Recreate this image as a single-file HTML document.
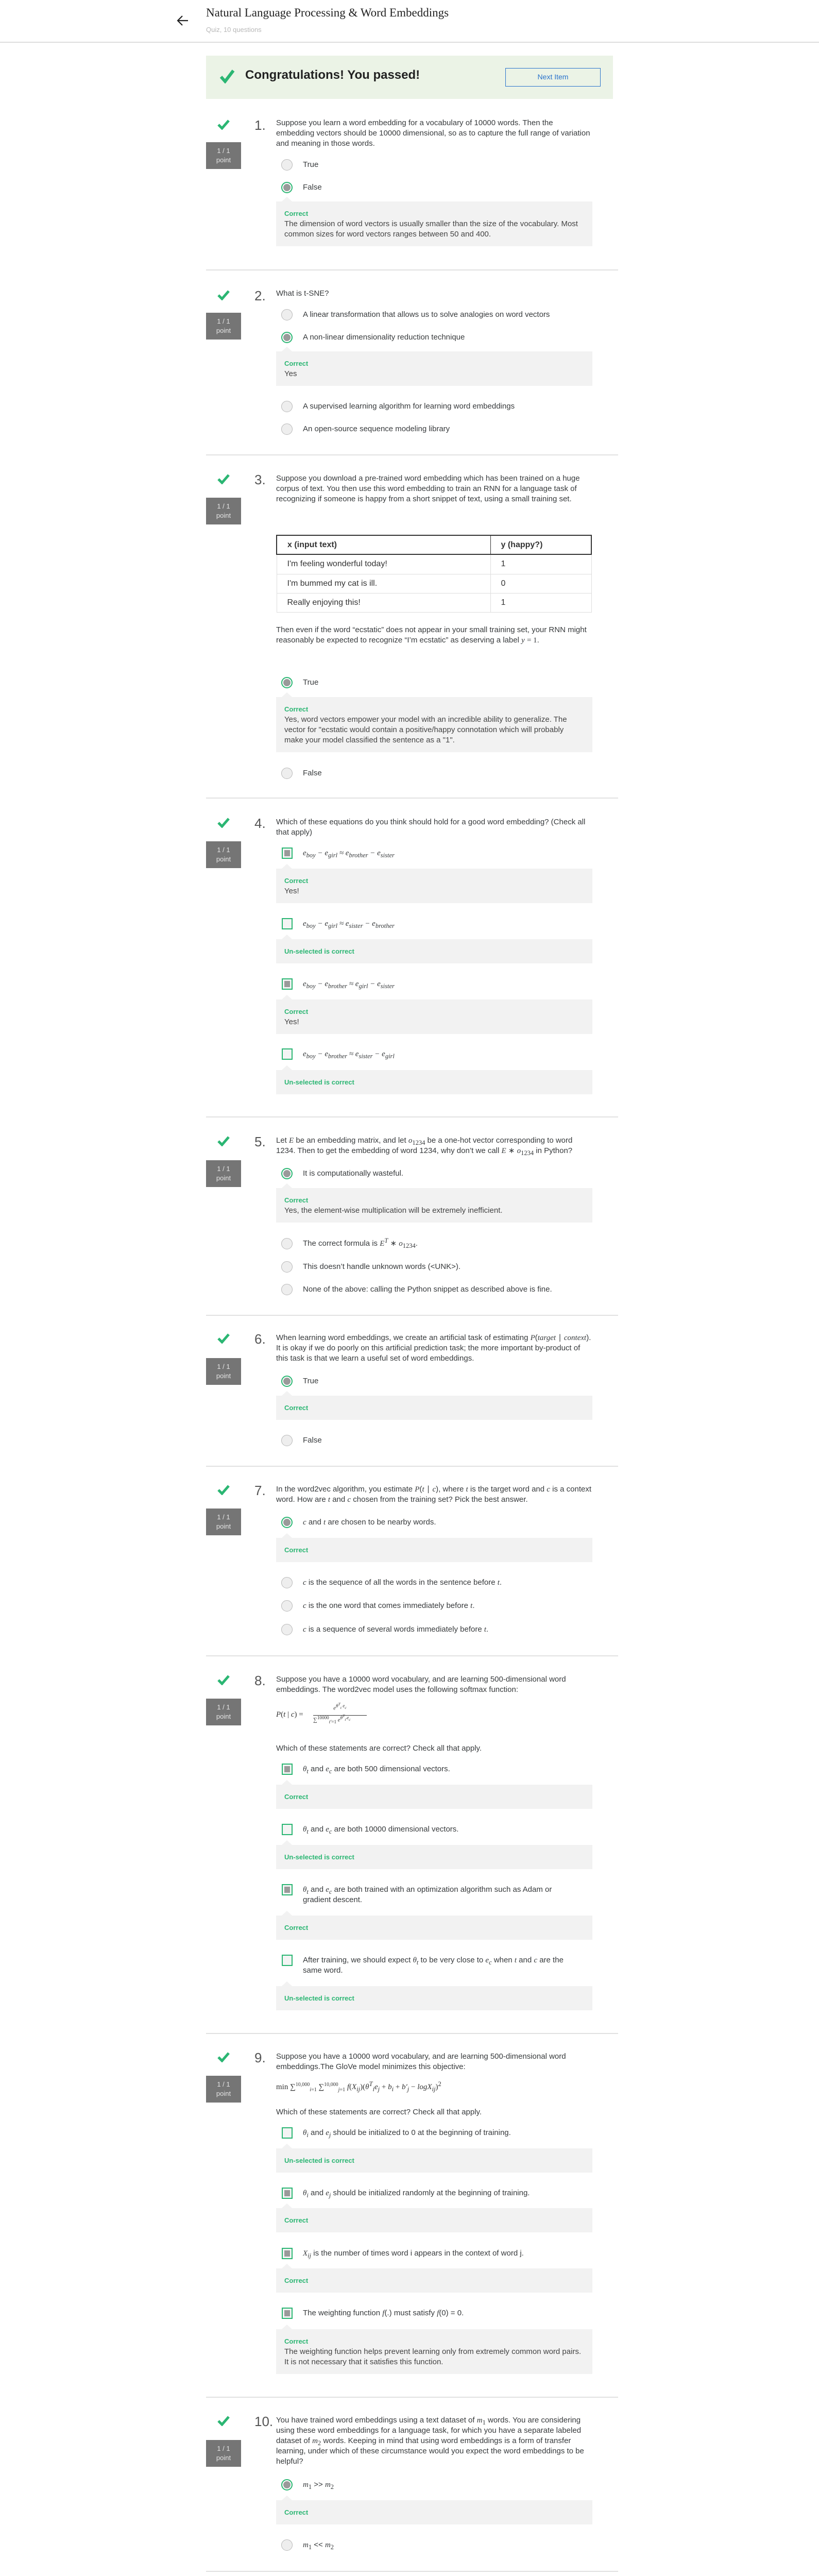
<!DOCTYPE html>
<html><head><meta charset="utf-8">
<style>
*{margin:0;padding:0;box-sizing:border-box}
body{width:1590px;height:5198px;position:relative;background:#fff;font-family:"Liberation Sans",sans-serif;color:#373a3c;overflow:hidden}
.a{position:absolute}
.m{font-family:"Liberation Serif",serif;font-style:italic}
.mr{font-family:"Liberation Serif",serif}
sub,sup{line-height:0}
.chk{position:absolute;left:422px;width:24px;height:20px}
.num{position:absolute;left:494px;font-size:26px;font-weight:300;color:#555;line-height:28px}
.score{position:absolute;left:400px;width:68px;height:52px;background:#757575;color:#e4e4e4;font-size:13px;line-height:18px;text-align:center;padding-top:8px}
.q{position:absolute;left:536px;width:614px;font-size:15px;line-height:20px;color:#373a3c}
.rad{position:absolute;left:546px;width:22px;height:22px;border-radius:50%;background:#eee;border:1px solid #b9b9b9}
.rad.s{background:#fff;border:2px solid #2bb673}
.rad.s::after{content:"";position:absolute;left:2px;top:2px;width:14px;height:14px;border-radius:50%;background:#9a9a9a}
.cb{position:absolute;left:547px;width:21px;height:22px;border:2px solid #2bb673;background:#f4f4f4}
.cb.s::after{content:"";position:absolute;left:3px;top:3px;width:11px;height:12px;background:#9a9a9a}
.ot{position:absolute;left:588px;width:562px;font-size:15px;line-height:20px;color:#373a3c}
.fb{position:absolute;left:536px;width:614px;background:#f2f2f2;padding:14px 16px 13px;font-size:15px;line-height:20px;color:#444}
.fb::before{content:"";position:absolute;left:11px;top:-9px;border-left:10px solid transparent;border-right:10px solid transparent;border-bottom:9px solid #f2f2f2}
.fb b{display:block;color:#2bb673;font-size:13px}
.dv{position:absolute;left:400px;width:800px;height:2px;background:#e1e1e1}
table{border-collapse:collapse}
</style></head><body>

<!-- header -->
<svg class="a" style="left:343px;top:29px" width="24" height="22" viewBox="0 0 24 22"><path d="M22 11H3M11 2L2 11l9 9" fill="none" stroke="#222" stroke-width="2.2"/></svg>
<div class="a mr" style="left:400px;top:12px;font-size:23px;color:#222;font-style:normal;white-space:nowrap">Natural Language Processing &amp; Word Embeddings</div>
<div class="a" style="left:400px;top:50px;font-size:13px;color:#b8b8b8">Quiz, 10 questions</div>
<div class="a" style="left:0;top:81px;width:1590px;height:2px;background:#ddd"></div>

<!-- banner -->
<div class="a" style="left:400px;top:108px;width:790px;height:84px;background:#ebf3e6"></div>
<svg class="a" style="left:426px;top:134px" width="30" height="28" viewBox="0 0 30 28"><path d="M3 15l8 9L27 3" fill="none" stroke="#2bb673" stroke-width="6"/></svg>
<div class="a" style="left:476px;top:132px;font-size:24px;font-weight:bold;color:#222;white-space:nowrap">Congratulations! You passed!</div>
<div class="a" style="left:981px;top:132px;width:185px;height:36px;border:1.5px solid #2a73cc;color:#2a73cc;font-size:14px;text-align:center;line-height:33px">Next Item</div>

<!-- Q1 -->
<svg class="chk" style="top:232px" viewBox="0 0 24 20"><path d="M2 10l7 7L22 2" fill="none" stroke="#2bb673" stroke-width="5"/></svg>
<div class="num" style="top:229px">1.</div>
<div class="score" style="top:276px">1 / 1<br>point</div>
<div class="q" style="top:229px">Suppose you learn a word embedding for a vocabulary of 10000 words. Then the embedding vectors should be 10000 dimensional, so as to capture the full range of variation and meaning in those words.</div>
<div class="rad" style="top:309px"></div><div class="ot" style="top:310px">True</div>
<div class="rad s" style="top:353px"></div><div class="ot" style="top:354px">False</div>
<div class="fb" style="top:391px"><b>Correct</b>The dimension of word vectors is usually smaller than the size of the vocabulary. Most common sizes for word vectors ranges between 50 and 400.</div>
<div class="dv" style="top:523px"></div>

<!-- Q2 -->
<svg class="chk" style="top:563px" viewBox="0 0 24 20"><path d="M2 10l7 7L22 2" fill="none" stroke="#2bb673" stroke-width="5"/></svg>
<div class="num" style="top:560px">2.</div>
<div class="score" style="top:607px">1 / 1<br>point</div>
<div class="q" style="top:560px">What is t-SNE?</div>
<div class="rad" style="top:600px"></div><div class="ot" style="top:601px">A linear transformation that allows us to solve analogies on word vectors</div>
<div class="rad s" style="top:644px"></div><div class="ot" style="top:645px">A non-linear dimensionality reduction technique</div>
<div class="fb" style="top:682px"><b>Correct</b>Yes</div>
<div class="rad" style="top:778px"></div><div class="ot" style="top:779px">A supervised learning algorithm for learning word embeddings</div>
<div class="rad" style="top:822px"></div><div class="ot" style="top:823px">An open-source sequence modeling library</div>
<div class="dv" style="top:882px"></div>

<!-- Q3 -->
<svg class="chk" style="top:920px" viewBox="0 0 24 20"><path d="M2 10l7 7L22 2" fill="none" stroke="#2bb673" stroke-width="5"/></svg>
<div class="num" style="top:917px">3.</div>
<div class="score" style="top:966px">1 / 1<br>point</div>
<div class="q" style="top:919px">Suppose you download a pre-trained word embedding which has been trained on a huge corpus of text. You then use this word embedding to train an RNN for a language task of recognizing if someone is happy from a short snippet of text, using a small training set.</div>
<table class="a" style="left:536px;top:1038px;width:613px;font-size:16px;color:#333">
<tr style="height:37px;border:2px solid #333"><th style="text-align:left;padding-left:20px;width:415px;border-right:1px solid #333">x (input text)</th><th style="text-align:left;padding-left:20px">y (happy?)</th></tr>
<tr style="height:38px;border:1px solid #ddd"><td style="padding-left:20px;border-right:1px solid #ddd">I'm feeling wonderful today!</td><td style="padding-left:20px">1</td></tr>
<tr style="height:37px;border:1px solid #ddd"><td style="padding-left:20px;border-right:1px solid #ddd">I'm bummed my cat is ill.</td><td style="padding-left:20px">0</td></tr>
<tr style="height:37px;border:1px solid #ddd"><td style="padding-left:20px;border-right:1px solid #ddd">Really enjoying this!</td><td style="padding-left:20px">1</td></tr>
</table>
<div class="q" style="top:1213px">Then even if the word “ecstatic” does not appear in your small training set, your RNN might reasonably be expected to recognize “I’m ecstatic” as deserving a label <span class="m">y</span> <span class="mr">= 1</span>.</div>
<div class="rad s" style="top:1314px"></div><div class="ot" style="top:1315px">True</div>
<div class="fb" style="top:1353px"><b>Correct</b>Yes, word vectors empower your model with an incredible ability to generalize. The vector for "ecstatic would contain a positive/happy connotation which will probably make your model classified the sentence as a "1".</div>
<div class="rad" style="top:1490px"></div><div class="ot" style="top:1491px">False</div>
<div class="dv" style="top:1548px"></div>

<!-- Q4 -->
<svg class="chk" style="top:1587px" viewBox="0 0 24 20"><path d="M2 10l7 7L22 2" fill="none" stroke="#2bb673" stroke-width="5"/></svg>
<div class="num" style="top:1584px">4.</div>
<div class="score" style="top:1633px">1 / 1<br>point</div>
<div class="q" style="top:1586px">Which of these equations do you think should hold for a good word embedding? (Check all that apply)</div>
<div class="cb s" style="top:1645px"></div><div class="ot m" style="top:1646px">e<sub>boy</sub> − e<sub>girl</sub> ≈ e<sub>brother</sub> − e<sub>sister</sub></div>
<div class="fb" style="top:1686px"><b>Correct</b>Yes!</div>
<div class="cb" style="top:1782px"></div><div class="ot m" style="top:1783px">e<sub>boy</sub> − e<sub>girl</sub> ≈ e<sub>sister</sub> − e<sub>brother</sub></div>
<div class="fb" style="top:1823px"><b>Un-selected is correct</b></div>
<div class="cb s" style="top:1899px"></div><div class="ot m" style="top:1900px">e<sub>boy</sub> − e<sub>brother</sub> ≈ e<sub>girl</sub> − e<sub>sister</sub></div>
<div class="fb" style="top:1940px"><b>Correct</b>Yes!</div>
<div class="cb" style="top:2035px"></div><div class="ot m" style="top:2036px">e<sub>boy</sub> − e<sub>brother</sub> ≈ e<sub>sister</sub> − e<sub>girl</sub></div>
<div class="fb" style="top:2077px"><b>Un-selected is correct</b></div>
<div class="dv" style="top:2167px"></div>

<!-- Q5 -->
<svg class="chk" style="top:2205px" viewBox="0 0 24 20"><path d="M2 10l7 7L22 2" fill="none" stroke="#2bb673" stroke-width="5"/></svg>
<div class="num" style="top:2202px">5.</div>
<div class="score" style="top:2252px">1 / 1<br>point</div>
<div class="q" style="top:2204px">Let <span class="m">E</span> be an embedding matrix, and let <span class="m">o</span><sub class="mr">1234</sub> be a one-hot vector corresponding to word 1234. Then to get the embedding of word 1234, why don’t we call <span class="m">E</span> ∗ <span class="m">o</span><sub class="mr">1234</sub> in Python?</div>
<div class="rad s" style="top:2267px"></div><div class="ot" style="top:2268px">It is computationally wasteful.</div>
<div class="fb" style="top:2306px"><b>Correct</b>Yes, the element-wise multiplication will be extremely inefficient.</div>
<div class="rad" style="top:2403px"></div><div class="ot" style="top:2404px">The correct formula is <span class="m">E<sup>T</sup></span> ∗ <span class="m">o</span><sub class="mr">1234</sub>.</div>
<div class="rad" style="top:2448px"></div><div class="ot" style="top:2449px">This doesn’t handle unknown words (&lt;UNK&gt;).</div>
<div class="rad" style="top:2492px"></div><div class="ot" style="top:2493px">None of the above: calling the Python snippet as described above is fine.</div>
<div class="dv" style="top:2552px"></div>

<!-- Q6 -->
<svg class="chk" style="top:2588px" viewBox="0 0 24 20"><path d="M2 10l7 7L22 2" fill="none" stroke="#2bb673" stroke-width="5"/></svg>
<div class="num" style="top:2585px">6.</div>
<div class="score" style="top:2636px">1 / 1<br>point</div>
<div class="q" style="top:2587px">When learning word embeddings, we create an artificial task of estimating <span class="m">P</span>(<span class="m">target</span> ∣ <span class="m">context</span>). It is okay if we do poorly on this artificial prediction task; the more important by-product of this task is that we learn a useful set of word embeddings.</div>
<div class="rad s" style="top:2670px"></div><div class="ot" style="top:2671px">True</div>
<div class="fb" style="top:2709px"><b>Correct</b></div>
<div class="rad" style="top:2785px"></div><div class="ot" style="top:2786px">False</div>
<div class="dv" style="top:2845px"></div>

<!-- Q7 -->
<svg class="chk" style="top:2882px" viewBox="0 0 24 20"><path d="M2 10l7 7L22 2" fill="none" stroke="#2bb673" stroke-width="5"/></svg>
<div class="num" style="top:2879px">7.</div>
<div class="score" style="top:2928px">1 / 1<br>point</div>
<div class="q" style="top:2881px">In the word2vec algorithm, you estimate <span class="m">P</span>(<span class="m">t</span> ∣ <span class="m">c</span>), where <span class="m">t</span> is the target word and <span class="m">c</span> is a context word. How are <span class="m">t</span> and <span class="m">c</span> chosen from the training set? Pick the best answer.</div>
<div class="rad s" style="top:2944px"></div><div class="ot" style="top:2945px"><span class="m">c</span> and <span class="m">t</span> are chosen to be nearby words.</div>
<div class="fb" style="top:2985px"><b>Correct</b></div>
<div class="rad" style="top:3061px"></div><div class="ot" style="top:3062px"><span class="m">c</span> is the sequence of all the words in the sentence before <span class="m">t</span>.</div>
<div class="rad" style="top:3106px"></div><div class="ot" style="top:3107px"><span class="m">c</span> is the one word that comes immediately before <span class="m">t</span>.</div>
<div class="rad" style="top:3152px"></div><div class="ot" style="top:3153px"><span class="m">c</span> is a sequence of several words immediately before <span class="m">t</span>.</div>
<div class="dv" style="top:3213px"></div>

<!-- Q8 -->
<svg class="chk" style="top:3251px" viewBox="0 0 24 20"><path d="M2 10l7 7L22 2" fill="none" stroke="#2bb673" stroke-width="5"/></svg>
<div class="num" style="top:3248px">8.</div>
<div class="score" style="top:3297px">1 / 1<br>point</div>
<div class="q" style="top:3250px">Suppose you have a 10000 word vocabulary, and are learning 500-dimensional word embeddings. The word2vec model uses the following softmax function:</div>
<div class="a mr" style="left:536px;top:3308px;font-size:15px;color:#333;white-space:nowrap">
<span style="position:absolute;top:12px"><i>P</i>(<i>t</i> | <i>c</i>) =</span>
<span style="position:absolute;left:72px;top:0;width:104px;text-align:center;font-size:11px"><i>e</i><sup><i>θ<sup>T</sup><sub>t</sub> e<sub>c</sub></i></sup></span>
<span style="position:absolute;left:72px;top:21px;width:104px;height:1px;background:#333"></span>
<span style="position:absolute;left:72px;top:23px;font-size:11px">∑<sup>10000</sup><sub><i>t′</i>=1</sub> <i>e</i><sup><i>θ<sup>T</sup><sub>t′</sub>e<sub>c</sub></i></sup></span>
</div>
<div class="q" style="top:3384px">Which of these statements are correct? Check all that apply.</div>
<div class="cb s" style="top:3423px"></div><div class="ot" style="top:3424px"><span class="m">θ<sub>t</sub></span> and <span class="m">e<sub>c</sub></span> are both 500 dimensional vectors.</div>
<div class="fb" style="top:3464px"><b>Correct</b></div>
<div class="cb" style="top:3540px"></div><div class="ot" style="top:3541px"><span class="m">θ<sub>t</sub></span> and <span class="m">e<sub>c</sub></span> are both 10000 dimensional vectors.</div>
<div class="fb" style="top:3581px"><b>Un-selected is correct</b></div>
<div class="cb s" style="top:3657px"></div><div class="ot" style="top:3658px"><span class="m">θ<sub>t</sub></span> and <span class="m">e<sub>c</sub></span> are both trained with an optimization algorithm such as Adam or<br>gradient descent.</div>
<div class="fb" style="top:3718px"><b>Correct</b></div>
<div class="cb" style="top:3794px"></div><div class="ot" style="top:3795px">After training, we should expect <span class="m">θ<sub>t</sub></span> to be very close to <span class="m">e<sub>c</sub></span> when <span class="m">t</span> and <span class="m">c</span> are the<br>same word.</div>
<div class="fb" style="top:3855px"><b>Un-selected is correct</b></div>
<div class="dv" style="top:3946px"></div>

<!-- Q9 -->
<svg class="chk" style="top:3983px" viewBox="0 0 24 20"><path d="M2 10l7 7L22 2" fill="none" stroke="#2bb673" stroke-width="5"/></svg>
<div class="num" style="top:3980px">9.</div>
<div class="score" style="top:4029px">1 / 1<br>point</div>
<div class="q" style="top:3982px">Suppose you have a 10000 word vocabulary, and are learning 500-dimensional word embeddings.The GloVe model minimizes this objective:</div>
<div class="a mr" style="left:536px;top:4043px;font-size:15px;color:#333;white-space:nowrap">min ∑<sup style="font-size:10px">10,000</sup><sub style="font-size:10px"><i>i</i>=1</sub> ∑<sup style="font-size:10px">10,000</sup><sub style="font-size:10px"><i>j</i>=1</sub> <i>f</i>(<i>X<sub>ij</sub></i>)(<i>θ<sup>T</sup><sub>i</sub>e<sub>j</sub></i> + <i>b<sub>i</sub></i> + <i>b′<sub>j</sub></i> − <i>logX<sub>ij</sub></i>)<sup>2</sup></div>
<div class="q" style="top:4090px">Which of these statements are correct? Check all that apply.</div>
<div class="cb" style="top:4129px"></div><div class="ot" style="top:4130px"><span class="m">θ<sub>i</sub></span> and <span class="m">e<sub>j</sub></span> should be initialized to 0 at the beginning of training.</div>
<div class="fb" style="top:4170px"><b>Un-selected is correct</b></div>
<div class="cb s" style="top:4246px"></div><div class="ot" style="top:4247px"><span class="m">θ<sub>i</sub></span> and <span class="m">e<sub>j</sub></span> should be initialized randomly at the beginning of training.</div>
<div class="fb" style="top:4286px"><b>Correct</b></div>
<div class="cb s" style="top:4363px"></div><div class="ot" style="top:4364px"><span class="m">X<sub>ij</sub></span> is the number of times word i appears in the context of word j.</div>
<div class="fb" style="top:4403px"><b>Correct</b></div>
<div class="cb s" style="top:4479px"></div><div class="ot" style="top:4480px">The weighting function <span class="m">f</span>(.) must satisfy <span class="m">f</span>(0) = 0.</div>
<div class="fb" style="top:4521px"><b>Correct</b>The weighting function helps prevent learning only from extremely common word pairs. It is not necessary that it satisfies this function.</div>
<div class="dv" style="top:4652px"></div>

<!-- Q10 -->
<svg class="chk" style="top:4689px" viewBox="0 0 24 20"><path d="M2 10l7 7L22 2" fill="none" stroke="#2bb673" stroke-width="5"/></svg>
<div class="num" style="top:4686px">10.</div>
<div class="score" style="top:4736px">1 / 1<br>point</div>
<div class="q" style="top:4688px">You have trained word embeddings using a text dataset of <span class="m">m</span><sub class="mr">1</sub> words. You are considering using these word embeddings for a language task, for which you have a separate labeled dataset of <span class="m">m</span><sub class="mr">2</sub> words. Keeping in mind that using word embeddings is a form of transfer learning, under which of these circumstance would you expect the word embeddings to be helpful?</div>
<div class="rad s" style="top:4812px"></div><div class="ot" style="top:4813px"><span class="m">m</span><sub class="mr">1</sub> &gt;&gt; <span class="m">m</span><sub class="mr">2</sub></div>
<div class="fb" style="top:4853px"><b>Correct</b></div>
<div class="rad" style="top:4929px"></div><div class="ot" style="top:4930px"><span class="m">m</span><sub class="mr">1</sub> &lt;&lt; <span class="m">m</span><sub class="mr">2</sub></div>
<div class="dv" style="top:4990px"></div>

<!-- footer -->
<div class="a" style="left:315px;top:5071px;width:960px;height:1px;background:#ccc"></div>
<svg class="a" style="left:346px;top:5090px" width="24" height="24" viewBox="0 0 24 24"><path d="M4 12h4v10H4zM8 12l4-9c2 0 3 1 2.5 3L14 10h6c1.2 0 2 1 1.7 2l-2 8c-.3 1-1 2-2 2H8" fill="none" stroke="#555" stroke-width="1.2"/></svg>
<svg class="a" style="left:388px;top:5090px" width="24" height="24" viewBox="0 0 24 24"><path d="M4 2h4v10H4zM8 12l4 9c2 0 3-1 2.5-3L14 14h6c1.2 0 2-1 1.7-2l-2-8c-.3-1-1-2-2-2H8" fill="none" stroke="#555" stroke-width="1.2"/></svg>
<svg class="a" style="left:429px;top:5090px" width="18" height="24" viewBox="0 0 18 24"><path d="M2 23V2h14v10H2" fill="none" stroke="#555" stroke-width="1.2"/></svg>
</body></html>
